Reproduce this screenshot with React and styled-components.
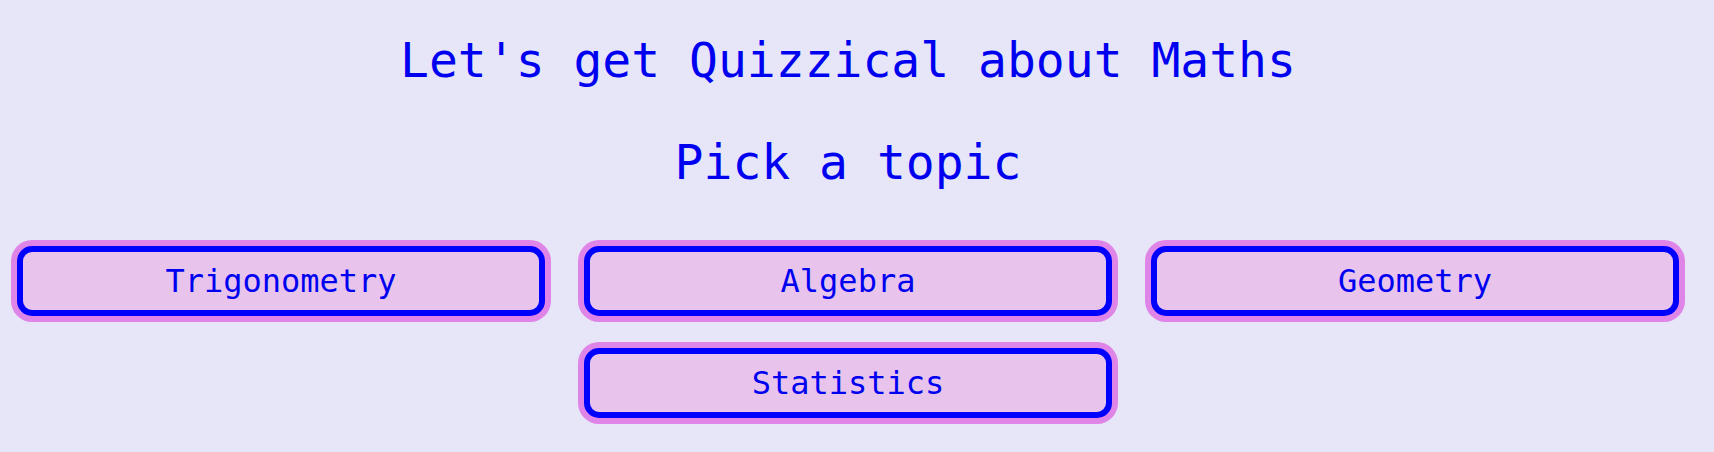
import styled, { createGlobalStyle } from 'styled-components'

const GlobalStyle = createGlobalStyle`
body {
  margin: 0;
  background: #e6e6f8;
  font-family: "DejaVu Sans Mono", "Liberation Mono", monospace;
  color: #0000f0;
}
`

const Page = styled.main`
padding: 32px 35px 20px 17px;
display: flex;
flex-direction: column;
align-items: center;
`

const Title = styled.h1`
margin: 0;
font-size: 48px;
font-weight: 400;
line-height: 56px;
`

const Subtitle = styled.h2`
margin: 46px 0 0;
font-size: 48px;
font-weight: 400;
line-height: 56px;
`

const TopicGrid = styled.div`
margin-top: 56px;
width: 100%;
display: flex;
flex-wrap: wrap;
justify-content: center;
column-gap: 39px;
row-gap: 32px;
`

const TopicButton = styled.button`
flex: 0 0 calc((100% - 78px) / 3);
box-sizing: border-box;
padding: 10px 0 9px;
font-family: inherit;
font-size: 32px;
line-height: 39px;
color: #0000f0;
background: #e8c4ec;
border: 6px solid #0000ff;
border-radius: 15px;
box-shadow: 0 0 0 6px #e085e8;
cursor: pointer;
`

const topics = ['Trigonometry', 'Algebra', 'Geometry', 'Statistics']

export default function App() {
  return (
    <>
      <GlobalStyle />
      <Page>
        <Title>Let's get Quizzical about Maths</Title>
        <Subtitle>Pick a topic</Subtitle>
        <TopicGrid>
          {topics.map((topic) => (
            <TopicButton key={topic}>{topic}</TopicButton>
          ))}
        </TopicGrid>
      </Page>
    </>
  )
}
